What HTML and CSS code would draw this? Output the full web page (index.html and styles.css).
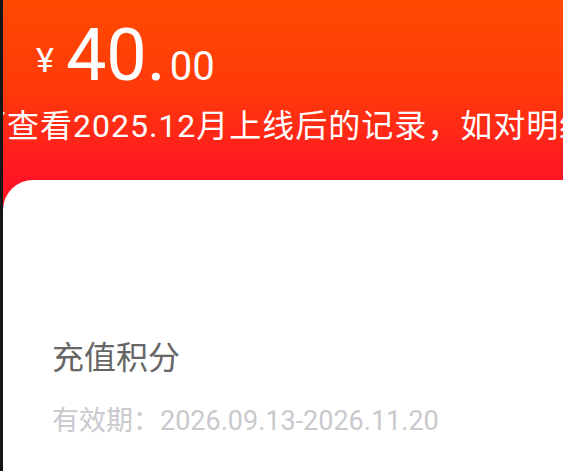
FILE: index.html
```html
<!DOCTYPE html>
<html lang="zh-CN">
<head>
<meta charset="utf-8">
<link rel="stylesheet" href="styles.css">
</head>
<body>
<div class="page">
  <header class="header">
    <div class="amount"><span class="yen">¥</span><span class="int">40.</span><span class="dec">00</span></div>
    <div class="notice">
      <span class="notice-text">仅可查看2025.12月上线后的记录，如对明细有疑问请联系客服</span>
    </div>
  </header>
  <section class="card">
    <div class="item-title">充值积分</div>
    <div class="item-date">有效期：2026.09.13-2026.11.20</div>
  </section>
</div>
</body>
</html>
```
FILE: styles.css
```css
html, body {
  margin: 0;
  padding: 0;
  height: 100%;
  background: #151515;
  overflow: hidden;
}
.page {
  margin-left: 3px;
  height: 100%;
  background: linear-gradient(180deg, #ff4a00 0px, #ff3a0a 90px, #ff1424 180px, #ff1424 100%);
  font-family: Roboto, "Noto Sans CJK SC", sans-serif;
  overflow: hidden;
}
.header {
  height: 180px;
  padding-top: 20px;
  box-sizing: border-box;
}
.amount {
  color: #fff;
  font-family: "Roboto", sans-serif;
  line-height: 72px;
  height: 72px;
  padding-left: 33px;
  white-space: nowrap;
}
.yen {
  font-size: 34px;
  vertical-align: 8px;
  margin-right: 12px;
}
.int {
  font-size: 72px;
}
.dec {
  font-size: 40px;
  margin-left: 4px;
}
.notice {
  margin-top: 18px;
  overflow: hidden;
  white-space: nowrap;
  color: #fff;
  font-size: 32px;
  line-height: 32px;
  letter-spacing: 1px;
}
.notice-text {
  display: inline-block;
  margin-left: -62px;
}
.card {
  background: #fff;
  border-top-left-radius: 30px;
  height: 400px;
  padding: 162px 0 0 49px;
  box-sizing: border-box;
}
.item-title {
  font-size: 32px;
  line-height: 32px;
  color: #666;
}
.item-date {
  margin-top: 34px;
  font-size: 27px;
  line-height: 27px;
  color: #c9c9ce;
}
```
